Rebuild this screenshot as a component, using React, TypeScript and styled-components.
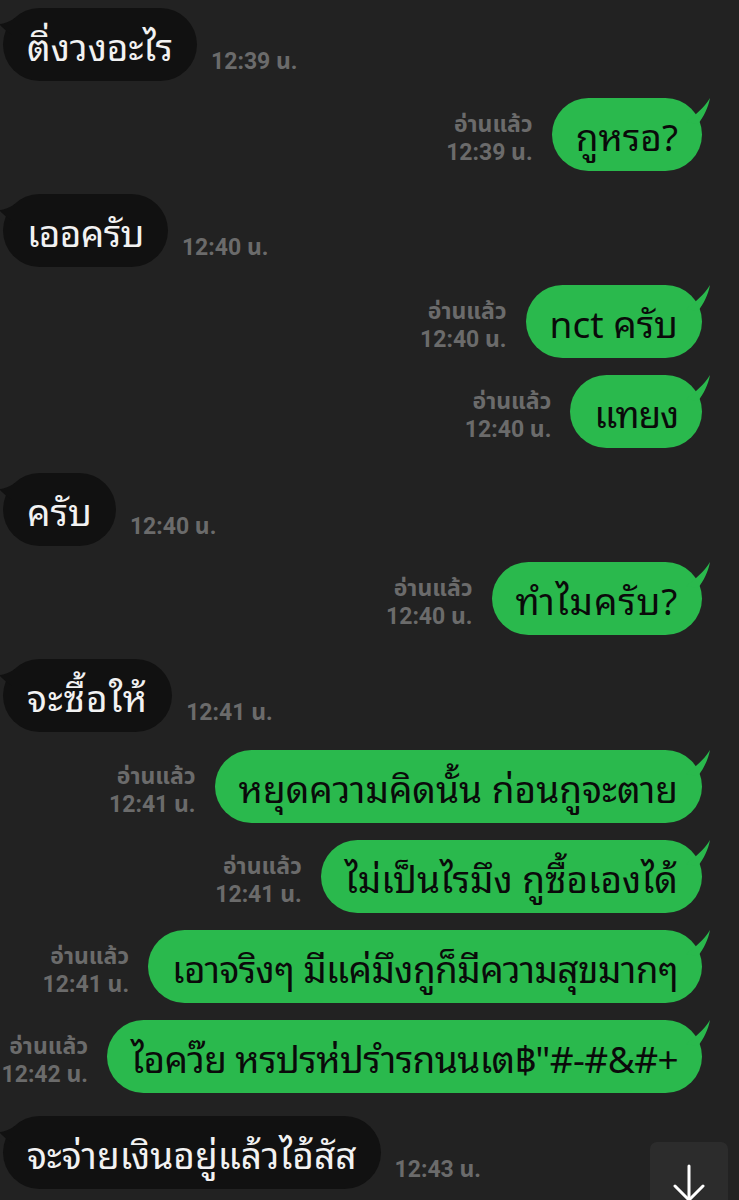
import React from "react";
import styled, { createGlobalStyle } from "styled-components";

const Global = createGlobalStyle`
  html, body { margin: 0; padding: 0; background: #222222; }
  body { width: 739px; height: 1200px; overflow: hidden; }
`;

const THAI = `"Noto Sans Thai Looped", "Noto Sans Thai", "Noto Sans", "DejaVu Sans", sans-serif`;

const Screen = styled.div`
  position: relative;
  width: 739px;
  height: 1200px;
  background: #222222;
  overflow: hidden;
  display: flex;
  flex-direction: column;
  padding-top: 8px;
  box-sizing: border-box;
`;

const Row = styled.div<{ $out?: boolean; $mt: number }>`
  display: flex;
  flex-direction: row;
  align-items: flex-end;
  justify-content: ${(p) => (p.$out ? "flex-end" : "flex-start")};
  margin-top: ${(p) => p.$mt}px;
  padding: ${(p) => (p.$out ? "0 37px 0 0" : "0 0 0 3px")};
  gap: ${(p) => (p.$out ? "19px" : "14px")};
`;

const Bubble = styled.div<{ $out?: boolean; $track?: number }>`
  position: relative;
  height: 73px;
  box-sizing: border-box;
  padding: 0 24px;
  border-radius: 37px;
  display: flex;
  align-items: center;
  background: ${(p) => (p.$out ? "#2ab94d" : "#111111")};
  color: ${(p) => (p.$out ? "#0a0a0a" : "#f2f2f2")};
  font-family: ${THAI};
  font-size: 37px;
  letter-spacing: ${(p) => p.$track ?? 0}px;
  white-space: nowrap;
  line-height: 1;
`;

const TailIn = styled.svg`
  position: absolute;
  left: -4px;
  top: 8px;
  width: 16px;
  height: 20px;
`;

const TailOut = styled.svg`
  position: absolute;
  right: -12px;
  top: -4px;
  width: 30px;
  height: 30px;
`;

const Meta = styled.div<{ $out?: boolean }>`
  display: flex;
  flex-direction: column;
  align-items: flex-end;
  font-family: Roboto, "Noto Sans Thai", "Noto Sans", sans-serif;
  font-weight: 700;
  font-size: 23px;
  line-height: 28px;
  color: #6b6b6b;
  padding-bottom: ${(p) => (p.$out ? "4px" : "5px")};
  white-space: nowrap;
`;

const ScrollButton = styled.div`
  position: absolute;
  left: 650px;
  top: 1142px;
  width: 78px;
  height: 78px;
  border-radius: 7px;
  background: #2c2c2c;
  display: flex;
  justify-content: center;
  padding-top: 22px;
  box-sizing: border-box;
`;

type Msg = { out?: boolean; text: string; time: string; mt: number; track?: number };

const msgs: Msg[] = [
  { text: "ติ่งวงอะไร", time: "12:39 น.", mt: 0 },
  { out: true, text: "กูหรอ?", time: "12:39 น.", mt: 17 },
  { text: "เออครับ", time: "12:40 น.", mt: 23, track: -0.6 },
  { out: true, text: "nct ครับ", time: "12:40 น.", mt: 18 },
  { out: true, text: "แทยง", time: "12:40 น.", mt: 17, track: -1.2 },
  { text: "ครับ", time: "12:40 น.", mt: 25 },
  { out: true, text: "ทำไมครับ?", time: "12:40 น.", mt: 16, track: 0.8 },
  { text: "จะซื้อให้", time: "12:41 น.", mt: 24, track: 1 },
  { out: true, text: "หยุดความคิดนั้น ก่อนกูจะตาย", time: "12:41 น.", mt: 18 },
  { out: true, text: "ไม่เป็นไรมึง กูซื้อเองได้", time: "12:41 น.", mt: 17 },
  { out: true, text: "เอาจริงๆ มีแค่มึงกูก็มีความสุขมากๆ", time: "12:41 น.", mt: 17, track: -0.6 },
  { out: true, text: "ไอคว๊ย หรปรห่ปรำรกนนเต฿\"#-#&#+", time: "12:42 น.", mt: 17, track: -0.6 },
  { text: "จะจ่ายเงินอยู่แล้วไอ้สัส", time: "12:43 น.", mt: 23 },
];

const Message: React.FC<{ m: Msg }> = ({ m }) => {
  if (m.out) {
    return (
      <Row $out $mt={m.mt}>
        <Meta $out>
          <span>อ่านแล้ว</span>
          <span>{m.time}</span>
        </Meta>
        <Bubble $out $track={m.track}>
          <TailOut viewBox="0 0 30 30">
            <path d="M2 28 C 10 22, 20 14, 26 4 C 24 14, 20 22, 14 30 Z" fill="#2ab94d" />
          </TailOut>
          {m.text}
        </Bubble>
      </Row>
    );
  }
  return (
    <Row $mt={m.mt}>
      <Bubble $track={m.track}>
        <TailIn viewBox="0 0 16 20">
          <path d="M16 2 C 10 6, 4 8, 0 8 C 4 12, 8 16, 16 20 Z" fill="#111111" />
        </TailIn>
        {m.text}
      </Bubble>
      <Meta>
        <span>{m.time}</span>
      </Meta>
    </Row>
  );
};

export default function App() {
  return (
    <>
      <Global />
      <Screen>
        {msgs.map((m, i) => (
          <Message key={i} m={m} />
        ))}
        <ScrollButton>
          <svg width="36" height="40" viewBox="0 0 36 40" fill="none" stroke="#ffffff" strokeWidth="3" strokeLinecap="round" strokeLinejoin="round">
            <path d="M18 2 V36" />
            <path d="M4 22 L18 36 L32 22" />
          </svg>
        </ScrollButton>
      </Screen>
    </>
  );
}
